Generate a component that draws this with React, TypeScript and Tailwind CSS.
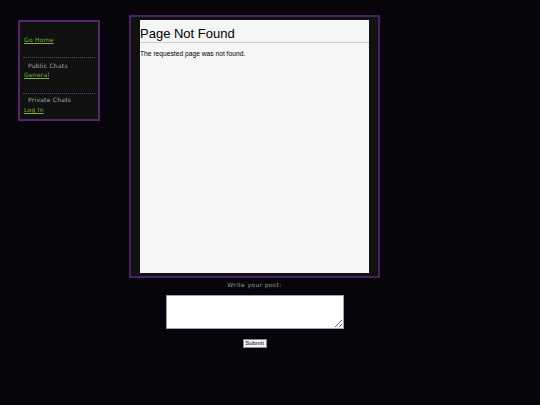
import React from "react";

export default function App() {
  const side = { fontFamily: '"DejaVu Sans", Verdana, sans-serif' };
  return (
    <div className="min-h-[405px] w-full bg-[#07040c] flex items-start" style={{ fontFamily: '"Liberation Sans", Arial, sans-serif' }}>
      <div
        className="ml-[18px] mt-[20px] w-[82px] border-2 border-[#55266a] bg-[#111111] px-[3px] pt-[13px] pb-[5px] text-[6px] tracking-[0.25px] leading-[9px]"
        style={side}
      >
        <div className="h-[9px] ml-[1px]">
          <a href="#" className="text-[#7bb13c] underline">Go Home</a>
        </div>
        <div className="mt-[13px] border-t border-dotted border-[#6a3585]" />
        <div className="mt-[2.5px] h-[9px] ml-[5px] text-[#a8a8a8]">Public Chats</div>
        <div className="h-[9px] ml-[1px]">
          <a href="#" className="text-[#7bb13c] underline">General</a>
        </div>
        <div className="mt-[14px] border-t border-dotted border-[#6a3585]" />
        <div className="mt-[1.5px] h-[9px] ml-[5px] text-[#a8a8a8]">Private Chats</div>
        <div className="mt-[1px] h-[9px] ml-[1px]">
          <a href="#" className="text-[#7bb13c] underline">Log In</a>
        </div>
      </div>

      <div className="ml-[29px] mt-[15px] flex flex-col items-center">
        <div className="w-[251px] h-[263px] border-2 border-[#4a2160] bg-[#111111] px-[9px] py-[3px]">
          <div className="h-full w-full bg-[#f5f5f5] text-black">
            <h1 className="pt-[6px] pb-[2px] h-[23px] text-[13px] leading-[15px] border-b border-[#cccccc] font-normal">
              Page Not Found
            </h1>
            <p className="mt-[7px] text-[6.7px] leading-[8px]">The requested page was not found.</p>
          </div>
        </div>
        <div className="mt-[3px] h-[8px] text-[6px] leading-[8px] tracking-[0.4px] text-[#9a9a9a]" style={side}>
          Write your post:
        </div>
        <textarea className="mt-[6px] w-[178px] h-[34px] bg-white border border-[#a0a0a0] block" />
        <button className="mt-[10px] w-[24px] h-[9px] bg-[#f4f4f4] border border-[#8a8a8a] text-[6px] leading-[7px] text-black p-0">
          Submit
        </button>
      </div>
    </div>
  );
}
